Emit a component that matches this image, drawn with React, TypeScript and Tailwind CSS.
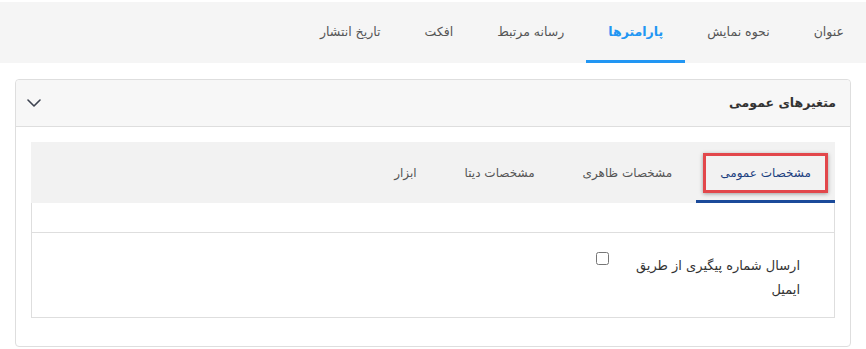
import React from 'react';

const topTabs = ['عنوان', 'نحوه نمایش', 'پارامترها', 'رسانه مرتبط', 'افکت', 'تاریخ انتشار'];
const innerTabs = ['مشخصات عمومی', 'مشخصات ظاهری', 'مشخصات دیتا', 'ابزار'];

export default function App() {
  const [activeTop, setActiveTop] = React.useState(2);
  const [activeInner, setActiveInner] = React.useState(0);
  const [open, setOpen] = React.useState(true);

  return (
    <div
      dir="rtl"
      className="w-[866px] h-[349px] bg-white pt-[2px] overflow-hidden"
      style={{ fontFamily: '"DejaVu Sans", Tahoma, sans-serif' }}
    >
      {/* Top tab bar */}
      <div className="flex h-[61px] bg-[#f5f5f5]">
        {topTabs.map((t, i) => (
          <button
            key={t}
            onClick={() => setActiveTop(i)}
            className={`relative flex items-center px-[22px] text-[12.5px] ${
              i === activeTop ? 'text-[#2196f3] font-semibold' : 'text-[#555]'
            }`}
          >
            {t}
            {i === activeTop && <span className="absolute inset-x-0 bottom-0 h-[3px] bg-[#2196f3]" />}
          </button>
        ))}
      </div>

      {/* Panel */}
      <div className="mx-[15px] mt-[16px] border border-[#dedede] rounded-[4px] h-[268px]">
        <div className="flex items-center justify-between h-[47px] bg-[#f7f7f7] border-b border-[#dedede] rounded-t-[4px] pr-[14px] pl-[9px]">
          <span className="text-[12.5px] font-bold text-[#333]">متغیرهای عمومی</span>
          <button onClick={() => setOpen(!open)} className="p-[2px]">
            <svg width="14" height="8" viewBox="0 0 14 8" fill="none">
              <path d="M1 1L7 7L13 1" stroke="#3d4350" strokeWidth="1.6" strokeLinecap="round" strokeLinejoin="round" />
            </svg>
          </button>
        </div>

        {open && (
          <div className="px-[15px] pt-[15px]">
            {/* Inner tabs */}
            <div className="flex h-[61px] bg-[#f2f2f2]">
              {innerTabs.map((t, i) => (
                <button
                  key={t}
                  onClick={() => setActiveInner(i)}
                  className={`relative flex items-center text-[12px] ${
                    i === activeInner ? 'px-[7px] text-[#1c3f80]' : 'px-[24px] text-[#555]'
                  }`}
                >
                  {i === activeInner ? (
                    <span className="flex items-center h-[40px] px-[14px] border-[3px] border-[#e2474b] shadow-[0_1px_4px_rgba(0,0,0,0.35)]">
                      {t}
                    </span>
                  ) : (
                    t
                  )}
                  {i === activeInner && <span className="absolute inset-x-0 bottom-0 h-[3px] bg-[#1b4a9a]" />}
                </button>
              ))}
            </div>

            <div className="border border-t-0 border-[#dedede]">
              <div className="h-[30px] border-b border-[#dedede]" />
              <div className="flex items-start h-[84px] pr-[34px] pt-[21px]">
                <label className="w-[170px] text-[13px] leading-[24px] text-[#333]">
                  ارسال شماره پیگیری از طریق ایمیل
                </label>
                <input
                  type="checkbox"
                  className="mr-[21px] -mt-[2px] w-[13px] h-[13px] accent-[#888]"
                />
              </div>
            </div>
          </div>
        )}
      </div>
    </div>
  );
}
